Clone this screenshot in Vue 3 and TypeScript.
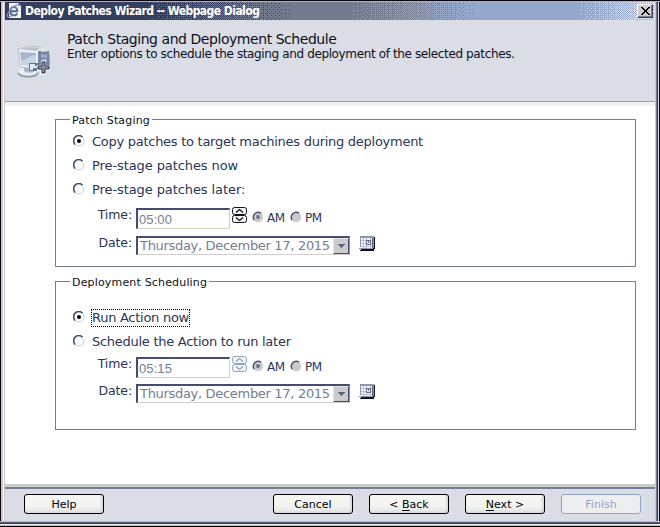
<script setup lang="ts">
import { ref } from 'vue'

interface Schedule {
  id: string
  legend: string
  options: { label: string; focused?: boolean; tight: boolean }[]
  time: string
  spinnerActive: boolean
}

const groups: Schedule[] = [
  {
    id: 'staging',
    legend: 'Patch Staging',
    options: [
      { label: 'Copy patches to target machines during deployment', tight: true },
      { label: 'Pre-stage patches now', tight: false },
      { label: 'Pre-stage patches later:', tight: false },
    ],
    time: '05:00',
    spinnerActive: true,
  },
  {
    id: 'deploy',
    legend: 'Deployment Scheduling',
    options: [
      { label: 'Run Action now', focused: true, tight: true },
      { label: 'Schedule the Action to run later', tight: true },
    ],
    time: '05:15',
    spinnerActive: false,
  },
]
const selected = ref<Record<string, number>>({ staging: 0, deploy: 0 })

const bayer = [0, 8, 2, 10, 12, 4, 14, 6, 3, 11, 1, 9, 15, 7, 13, 5]
// Ordered dither between two colours, from column `from` to column `to`.
function dither(from: number, to: number, end: number): string {
  let d = ''
  for (let y = 0; y < 18; y++) {
    for (let x = from; x < to; x++) {
      const t = (x - from) / (to - from)
      if (t * 16 > bayer[(y % 4) * 4 + (x % 4)] + 0.5) d += `M${x} ${y}h1v1h-1z`
    }
  }
  return d + `M${to} 0H${end}V18H${to}z`
}
const bands = [
  { fill: '#747b8f', d: dither(137, 289, 650) },
  { fill: '#95a8ca', d: dither(342, 474, 650) },
  { fill: '#dadde5', d: dither(572, 666, 670) },
]
</script>

<template>
  <div class="window">
    <div class="side left"></div>
    <main class="dialog">
      <header class="titlebar">
        <svg class="bands" width="650" height="18" shape-rendering="crispEdges">
          <path v-for="b in bands" :key="b.fill" :d="b.d" :fill="b.fill" />
        </svg>
        <svg class="page-icon" width="16" height="16" viewBox="0 0 16 16">
          <path d="M3 0h9l3 3v12H3z" fill="#f4f5f7" />
          <path d="M12 0v3h3z" fill="#929bb0" />
          <path d="M4.2 8.2h7.2c0-5.5-7-5.5-7.3 0 0 5 6 5.200 7 2" fill="none" stroke="#56698f" stroke-width="1.9" />
          <path d="M13 2C8 1 1 9 1.3 13.5c1 2 4-.5 5-1.5" fill="none" stroke="#8292b2" stroke-width="1.1" />
        </svg>
        <span class="caption">Deploy Patches Wizard -- Webpage Dialog</span>
        <button class="close" aria-label="Close">
          <svg width="9" height="8" viewBox="0 0 9 8" shape-rendering="crispEdges">
            <path d="M0 0h2v1h1v1h1v1h1V2h1V1h1V0h2v1H8v1H7v1H6v2h1v1h1v1h1v1H7V7H6V6H5V5H4v1H3v1H2v1H0V7h1V6h1V5h1V3H2V2H1V1H0z" fill="#000" />
          </svg>
        </button>
      </header>

      <section class="banner">
        <svg class="banner-icon" width="34" height="33" viewBox="0 0 34 33">
          <ellipse cx="11" cy="28" rx="10.5" ry="4.500" fill="#8796ab" />
          <ellipse cx="11" cy="26.500" rx="10" ry="4.200" fill="#e9edef" />
          <path d="M7 20h11v6c-2 2-9 2-11 0z" fill="#a3b4cb" />
          <path d="M1 4l13-3 10 1v20l-5 2-16-2z" fill="#eef1f3" stroke="#aab7c5" stroke-width=".8" />
          <path d="M3 7l16 1v13L4.500 20z" fill="#a3b7d3" />
          <path d="M4 15c5 1 8-5 15-5v11L4.500 20z" fill="#c7d4e3" />
          <path d="M2 4l13-2 8 1-4 3z" fill="#b9c1ca" />
          <path d="M21 6l11-1 1 15-8 3-4-2z" fill="#7687a4" />
          <path d="M21 4l4-2 7 1v3l-7 1z" fill="#dde2e7" />
          <path d="M24 9l6 1v3l-6-1zM25 14h5v2h-5z" fill="#9cafcc" />
          <path d="M12 18h10l2 8H12z" fill="#60789d" />
          <path d="M13 19h5v2h4v2h-6v2h-3z" fill="#e1e9ef" />
          <path d="M24 15.500h5V20h4v6h-4v4h-6v-4h-3v-6h4z" fill="#f4f6f7" />
          <path d="M25 17h3v4h4v3h-4v4h-3v-4h-4v-3h4z" fill="#8b939e" stroke="#28314a" />
        </svg>
        <div class="heading">
          <h1>Patch Staging and Deployment Schedule</h1>
          <p>Enter options to schedule the staging and deployment of the selected patches.</p>
        </div>
      </section>

      <form class="content" @submit.prevent>
        <fieldset v-for="g in groups" :key="g.id" :class="g.id">
          <legend>{{ g.legend }}</legend>
          <div v-for="(o, i) in g.options" :key="o.label" class="option" @click="selected[g.id] = i">
            <svg class="radio" width="12" height="12" viewBox="0 0 12 12">
              <circle cx="6" cy="6" r="5" fill="#fff" stroke="#d2d2d4" />
              <path d="M2.1 9.5A5.1 5.1 0 0 1 9.5 2.1" fill="none" stroke="#424e70" stroke-width="1.5" />
              <circle v-if="selected[g.id] === i" cx="6" cy="6" r="2" fill="#000" />
            </svg>
            <span class="option-label" :class="{ focused: o.focused, tight: o.tight }">{{ o.label }}</span>
          </div>

          <div class="time-row">
            <span class="field-label">Time:</span>
            <span class="time-input">{{ g.time }}</span>
            <svg class="spinner" width="15" height="16" viewBox="0 0 15 16" :class="{ active: g.spinnerActive }">
              <rect x=".5" y=".5" width="14" height="7" rx="2" />
              <rect x=".5" y="8.5" width="14" height="7" rx="2" />
              <path d="M4 5.500l3.500-3 3.500 3M4 10.500l3.500 3 3.500-3" class="arrows" />
            </svg>
            <template v-for="(m, i) in ['AM', 'PM']" :key="m">
              <svg class="radio small" width="12" height="12" viewBox="0 0 12 12">
                <circle cx="6" cy="6" r="5.2" fill="#cbcbcb" />
                <path d="M2.2 9A4.9 4.9 0 0 1 9 2.2" fill="none" stroke="#4a5675" stroke-width="1.5" />
                <circle v-if="i === 0" cx="6" cy="6" r="2" fill="#68738e" />
              </svg>
              <span class="meridiem">{{ m }}</span>
            </template>
          </div>

          <div class="date-row">
            <span class="field-label">Date:</span>
            <span class="date-select">
              <span class="date-text">Thursday, December 17, 2015</span>
              <span class="drop">
                <svg width="7" height="4" viewBox="0 0 7 4" shape-rendering="crispEdges">
                  <path d="M0 0h7v1H6v1H5v1H4v1H3V3H2V2H1V1H0z" fill="#59657f" />
                </svg>
              </span>
            </span>
            <svg class="calendar" width="16" height="15" viewBox="0 0 16 15" shape-rendering="crispEdges">
              <path d="M3 1h13v12h-1v2H1v-1h1z" fill="#10131d" />
              <path d="M1 0h14v12h-1v1H0v-1h1z" fill="#8d99b3" />
              <path d="M2 2h11v10H1v-1h1z" fill="#f1f2f3" />
              <path d="M4 2h1v10H4zM7 2h1v10H7zM11 2h1v10h-1zM2 4h11v1H2zM2 7h11v1H2zM2 10h11v1H2z" fill="#bfc3ca" />
              <path d="M13 2h1v10h-1z" fill="#59657f" />
              <path d="M7 4h5v5H7z" fill="#63718f" />
              <path d="M8 5h3v3H8z" fill="#e7eaf0" />
              <path d="M9 5h1v2H9z" fill="#63718f" />
            </svg>
          </div>
        </fieldset>
      </form>

      <footer class="actions">
        <button class="btn">Help</button>
        <span class="spacer"></span>
        <button class="btn">Cancel</button>
        <button class="btn">&lt; <u>B</u>ack</button>
        <button class="btn"><u>N</u>ext &gt;</button>
        <button class="btn disabled" disabled>Finish</button>
      </footer>
    </main>
    <div class="side right"></div>
  </div>
</template>

<style>
body { margin: 0; overflow: hidden; }
</style>

<style scoped>
* { box-sizing: border-box; }
.window {
  width: 660px;
  height: 527px;
  display: flex;
  padding-top: 2px;
  background: linear-gradient(#080410 0 1px, #b7adb5 1px 2px, transparent 2px 521px, #b8bac1 521px 522px, #59617a 522px 523px, #313b5c 523px 524px, #f4f4f4 524px 525px, #b9b9bd 525px 526px, #000 526px);
  font-family: "DejaVu Sans", Verdana, sans-serif;
  color: #2b3556;
}
.side { width: 5px; height: 519px; flex: none; }
.left { background: linear-gradient(90deg, #080410 0 1px, #cfc8cb 1px 3px, #fff 3px 4px, #cfc8cb 4px); }
.right { background: linear-gradient(90deg, #c9c9c9 0 1px, #737d94 1px 2px, #313b5c 2px 3px, #dadde5 3px 4px, #080410 4px); }
.dialog { width: 650px; height: 519px; display: flex; flex-direction: column; background: #fff; }
.titlebar { height: 18px; flex: none; display: flex; align-items: center; position: relative; background: #343e5e; }
.bands { position: absolute; left: 0; top: 0; }
.page-icon { position: relative; margin: 0 3px 0 1px; }
.caption {
  position: relative;
  font: bold 12px/18px "DejaVu Sans Condensed", "DejaVu Sans", sans-serif;
  font-stretch: condensed;
  letter-spacing: -0.54px;
  color: #fff;
  white-space: nowrap;
}
.close {
  position: relative;
  width: 16px; height: 14px;
  margin: 0 2px 0 auto; padding: 0;
  display: flex; align-items: center; justify-content: center;
  background: #cccccc;
  border: 1px solid;
  border-color: #fff #343e5e #343e5e #fff;
  box-shadow: inset -1px -1px #7a8194;
}
.banner { height: 82px; flex: none; display: flex; background: #dadde5; border-bottom: 1px solid #8fa4c2; }
.banner-icon { margin: 25px 16px 0 12px; }
.heading { padding-top: 11px; }
h1 { margin: 0; font-size: 14px; line-height: 16px; font-weight: normal; color: #0c101c; letter-spacing: -0.45px; white-space: nowrap; }
p { margin: 0; font-size: 12px; line-height: 14px; color: #0c101c; white-space: nowrap; letter-spacing: -0.37px; }
.content {
  height: 382px; flex: none;
  padding: 9px 19px 0 50px;
  background: linear-gradient(#eff1ec 0 2px, #f1f3ee 2px 4px, #fff 4px);
}
fieldset { margin: 0; padding: 0 0 0 17px; border: 1px solid #747d8f; min-width: 0; }
.staging { height: 156px; margin-bottom: 6px; }
.deploy { height: 157px; }
legend {
  margin-left: -3px; margin-bottom: 2px; padding: 3px 2px 0;
  font-size: 11px; line-height: 14px; color: #0c101c; letter-spacing: 0.17px;
}
.deploy legend { margin-bottom: 16px; }
.option { height: 24px; display: flex; align-items: center; }
.radio { flex: none; margin: 0 7px 2px 0; }
.option-label { font-size: 13px; line-height: 16px; white-space: nowrap; letter-spacing: -0.09px; }
.tight { letter-spacing: -0.27px; }
.focused { outline: 1px dotted #000; }
.time-row, .date-row { display: flex; align-items: flex-start; }
.time-row { height: 27px; padding-top: 6px; }
.deploy .time-row { padding-top: 3px; height: 30px; }
.date-row { height: 26px; padding-top: 7px; }
.deploy .date-row { padding-top: 0; }
.field-label { width: 63px; padding-right: 4px; text-align: right; font-size: 12.500px; line-height: 14px; white-space: nowrap; letter-spacing: -0.1px; }
.time-input {
  width: 94px; height: 21px; padding-left: 1px;
  border: 1px solid #cfcfcf; border-top: 2px solid #434e6e; border-left: 2px solid #434e6e;
  font: 13px/19px "Liberation Sans", Arial, sans-serif;
  letter-spacing: 0.1px;
  color: #737d94;
}
.spinner { margin: -1px 5px 0 2px; fill: #f1f3ee; stroke: #8fa4c8; }
.spinner.active { stroke: #10131d; }
.arrows { fill: none; stroke-width: 1.3; }
.small { margin: 3px 3px 0 0; }
.meridiem { width: 23px; font-size: 12px; line-height: 20px; letter-spacing: -0.4px; }
.date-select {
  display: flex; width: 214px; height: 19px;
  border: 1px solid #cfcfcf; border-top: 2px solid #434e6e; border-left: 2px solid #434e6e; border-right-color: #8b93a5;
}
.date-text { flex: 1; min-width: 0; padding-left: 2px; font-size: 13px; line-height: 16px; letter-spacing: -0.31px; color: #737d94; white-space: nowrap; }
.drop {
  width: 16px; height: 16px; flex: none;
  display: flex; align-items: center; justify-content: center;
  background: #cbcbcb;
  border: 1px solid; border-color: #e5e5e5 #434e6e #434e6e #e5e5e5;
}
.calendar { margin-left: 9px; }
.actions {
  flex: 1; display: flex; gap: 16px;
  padding: 10px 14px 0 19px;
  background: linear-gradient(#cbcdcb 0 3px, #747f95 3px 5px, #dadde5 5px);
}
.spacer { flex: 1; }
.btn {
  width: 80px; height: 20px; padding: 0;
  border: 1px solid #000; border-radius: 3px;
  background: linear-gradient(#f7f8f4, #f2f3ee 65%, #dfe1e5);
  box-shadow: inset -2px -1px 2px #d5d8de;
  font: 11px/17px "DejaVu Sans", Verdana, sans-serif;
  color: #000;
}
.btn u { text-underline-offset: 2px; }
.disabled { border-color: #8fa4c8; color: #8fa4c8; background: #eceef0; box-shadow: none; }
</style>
